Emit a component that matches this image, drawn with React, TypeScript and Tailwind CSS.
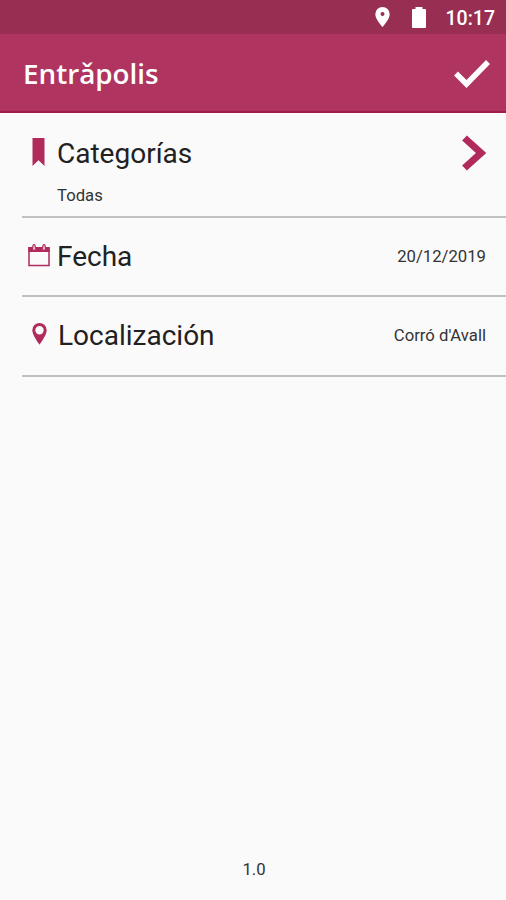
import type { ReactNode } from "react";

function StatusBar() {
  return (
    <div className="flex h-[34px] items-center justify-end bg-[#982f53] pr-[11px] text-white">
      <svg width="15" height="20" viewBox="0 0 15 20" className="mr-[22px]" fill="currentColor">
        <path
          fillRule="evenodd"
          d="M7.5 0A7.2 7.2 0 0 0 .3 7.2C.3 12.4 7.5 20 7.5 20s7.2-7.6 7.2-12.8A7.2 7.2 0 0 0 7.5 0Zm0 5a2 2 0 1 1 0 4 2 2 0 0 1 0-4Z"
        />
      </svg>
      <svg width="14" height="21" viewBox="0 0 14 21" className="mt-px mr-[20px]" fill="currentColor">
        <path d="M3.5 0h7v2H13a1 1 0 0 1 1 1v17a1 1 0 0 1-1 1H1a1 1 0 0 1-1-1V3a1 1 0 0 1 1-1h2.5Z" />
      </svg>
      <span className="mt-[4px] text-[19.5px] leading-6 font-medium">10:17</span>
    </div>
  );
}

function Header() {
  return (
    <header className="flex h-[79px] items-center justify-between border-b-2 border-[#9f1c49] bg-[#b03460] pr-[15px] pl-[23px] text-white">
      <h1 className="font-['Open_Sans','Noto_Sans',sans-serif] text-[27.8px] leading-9 font-semibold">
        Entrǎpolis
      </h1>
      <svg width="38" height="30" viewBox="0 0 38 30" fill="none" className="mt-[3px]">
        <path d="M3 14.5 13.5 25 35 3" stroke="currentColor" strokeWidth="5.5" />
      </svg>
    </header>
  );
}

function Row({ icon, title, value }: { icon: ReactNode; title: ReactNode; value: string }) {
  return (
    <div className="ml-[22px] flex items-center justify-between border-b-2 border-[#c1c1c1] pr-[20px]">
      <div className="flex items-center">
        <div className="-mt-[4px] flex w-[34px] justify-center">{icon}</div>
        <h2 className="pl-px text-[28px] leading-8">{title}</h2>
      </div>
      <span className="text-[16.7px] leading-5 text-[#333]">{value}</span>
    </div>
  );
}

export default function App() {
  return (
    <div className="flex h-[900px] w-[506px] flex-col bg-[#fafafa] font-[Roboto,sans-serif] text-[#212121]">
      <StatusBar />
      <Header />
      <main className="flex flex-1 flex-col">
        <section className="ml-[22px] h-[105px] border-b-2 border-[#c1c1c1] pt-[22px] pr-[20px]">
          <div className="flex h-[36px] items-center">
            <svg width="13" height="28" viewBox="0 0 13 28" className="mr-[12px] ml-[10px] -mt-[2px]">
              <path d="M.5 0h12v28l-6-5.8-6 5.8Z" fill="#b02a5b" />
            </svg>
            <h2 className="mt-[2px] text-[28px] leading-8">Categorías</h2>
            <svg width="25" height="36" viewBox="0 0 25 36" fill="none" className="ml-auto">
              <path d="m3.5 3 16.5 15-16.5 15" stroke="#b02a5b" strokeWidth="7" />
            </svg>
          </div>
          <p className="mt-[15px] ml-[35px] text-[16.7px] leading-5 text-[#333]">Todas</p>
        </section>
        <div className="grid h-[79px]">
          <Row
            title="Fecha"
            value="20/12/2019"
            icon={
              <svg width="22" height="24" viewBox="0 0 22 24" fill="none" stroke="#b02a5b">
                <path d="M1 5h20v17.500H1Z" strokeWidth="1.5" />
                <path d="M.3 6.5h21.4" strokeWidth="5" />
                <path d="M4.500 6.500 5 2.500q1-2 2 0l.8 4M14.200 6.500l.8-4q1-2 2 0l.5 4" strokeWidth="1.2" fill="#f3d9e2" />
              </svg>
            }
          />
        </div>
        <div className="grid h-[80px]">
          <Row
            title={<span className="pl-px">Localización</span>}
            value="Corró d'Avall"
            icon={
              <svg width="15" height="22" viewBox="0 0 15 22" className="ml-px">
                <path
                  fill="#b02a5b"
                  fillRule="evenodd"
                  d="M7.5 0A7.2 7.2 0 0 0 .3 7.2C.3 12.4 7.5 21.5 7.5 21.5s7.2-9.1 7.2-14.3A7.2 7.2 0 0 0 7.5 0Zm0 3a4.2 4.2 0 1 1 0 8.4 4.2 4.2 0 0 1 0-8.4Z"
                />
              </svg>
            }
          />
        </div>
        <footer className="mt-auto pb-[20px] pl-[2px] text-center text-[16.7px] leading-5 text-[#333]">1.0</footer>
      </main>
    </div>
  );
}
